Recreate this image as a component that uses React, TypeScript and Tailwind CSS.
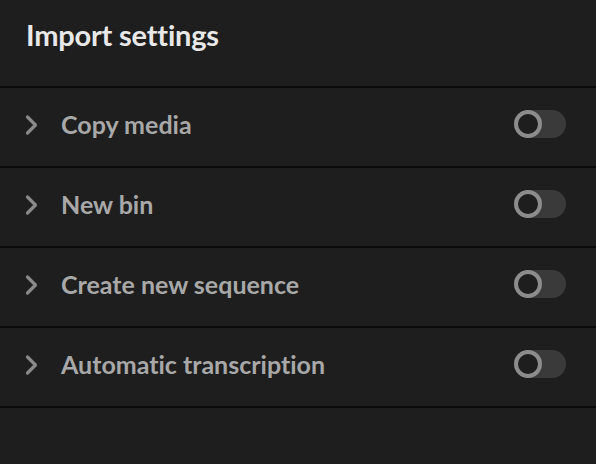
import React from "react";

const rows = ["Copy media", "New bin", "Create new sequence", "Automatic transcription"];

function Chevron() {
  return (
    <svg width="14" height="22" viewBox="0 0 14 22" className="shrink-0">
      <path d="M2.5 3 L10.5 11 L2.5 19" fill="none" stroke="#8a8a8a" strokeWidth="3.2" strokeLinecap="round" strokeLinejoin="round" />
    </svg>
  );
}

function Toggle() {
  return (
    <div className="relative w-[52px] h-[28px] shrink-0 -mt-[2px]">
      <div className="absolute inset-y-0 right-0 left-[2px] rounded-full bg-[#3a3a3a]" />
      <div className="absolute left-0 top-0 w-[28px] h-[28px] rounded-full border-4 border-[#8c8c8c] bg-[#1e1e1e]" />
    </div>
  );
}

export default function App() {
  return (
    <div className="w-[596px] h-[464px] bg-[#1e1e1e] overflow-hidden [font-variant-ligatures:none]" style={{ fontFamily: "Lato, 'Open Sans', sans-serif" }}>
      <div className="h-[88px] flex items-center pl-[26px] pb-[16px] border-b-2 border-[#0b0b0b]">
        <span className="text-[29px] font-bold text-[#e8e8e8] tracking-[-0.2px]">Import settings</span>
      </div>
      {rows.map((r) => (
        <div key={r} className="h-[80px] flex items-center border-b-2 border-[#0b0b0b] pl-[25px] pr-[30px] pb-[4px]">
          <Chevron />
          <span className="ml-[22px] text-[25px] font-bold text-[#a8a8a8] flex-1">{r}</span>
          <Toggle />
        </div>
      ))}
    </div>
  );
}
